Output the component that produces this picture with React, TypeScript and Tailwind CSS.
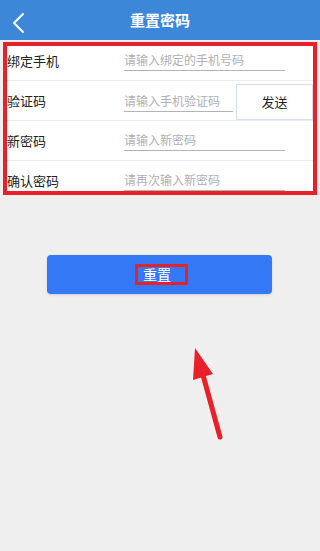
import React from 'react';

const rows = [
    { label: '绑定手机', placeholder: '请输入绑定的手机号码', short: false },
    { label: '验证码', placeholder: '请输入手机验证码', short: true },
    { label: '新密码', placeholder: '请输入新密码', short: false },
    { label: '确认密码', placeholder: '请再次输入新密码', short: false },
];

export default function App() {
    return (
        <div
            className="relative w-[320px] h-[551px] bg-[#efefef] overflow-hidden"
            style={{ fontFamily: '"Noto Sans CJK SC", "Noto Sans", sans-serif' }}
        >
            {/* header */}
            <div className="h-10 bg-[#3d87d9] flex items-center relative">
                <svg className="absolute left-[11px] top-[12px]" width="14" height="22" viewBox="0 0 14 22" fill="none">
                    <path d="M12 2L3 11l9 9" stroke="white" strokeWidth="2" strokeLinecap="round" strokeLinejoin="round" />
                </svg>
                <h1 className="w-full text-center text-white text-[15px] font-bold">重置密码</h1>
            </div>

            {/* form, outlined in red */}
            <div className="mt-[2px] mx-[3px] w-[314px] h-[153px] border-4 border-[#e8202a] bg-white overflow-hidden">
                <div className="-mt-[5px]">
                    {rows.map((row, i) => (
                        <div key={i} className="h-10 flex items-center border-b border-[#ececec]">
                            <span className="w-[117px] text-[13px] text-[#222]">{row.label}</span>
                            <div
                                className={`h-[20px] border-b border-[#b3b3b3] text-[12px] leading-[18px] text-[#b0b0b0] ${row.short ? 'w-[109px] mt-[2px]' : 'w-[161px]'}`}
                            >
                                {row.placeholder}
                            </div>
                            {row.short && (
                                <button className="ml-[3px] w-[77px] h-[36px] mt-[2px] border border-[#d3e0ee] bg-white text-[13px] text-[#222]">
                                    发送
                                </button>
                            )}
                        </div>
                    ))}
                </div>
            </div>

            {/* reset button */}
            <div className="mt-[60px] px-[47px]">
                <button className="w-[225px] h-[39px] rounded-[4px] bg-[#3478f6] shadow-sm flex items-center justify-center">
                    <span className="ml-[4px] w-[53px] h-[21px] border-[3px] border-[#e8202a] flex items-center pl-[5px] text-[14px] text-white">
                        重置
                    </span>
                </button>
            </div>

            {/* annotation arrow */}
            <svg className="absolute left-0 top-0 pointer-events-none" width="320" height="551" viewBox="0 0 320 551">
                <line x1="220" y1="437" x2="203" y2="375" stroke="#e8202a" strokeWidth="5" strokeLinecap="round" />
                <polygon points="195,348 193,380 213,374" fill="#e8202a" />
            </svg>
        </div>
    );
}
